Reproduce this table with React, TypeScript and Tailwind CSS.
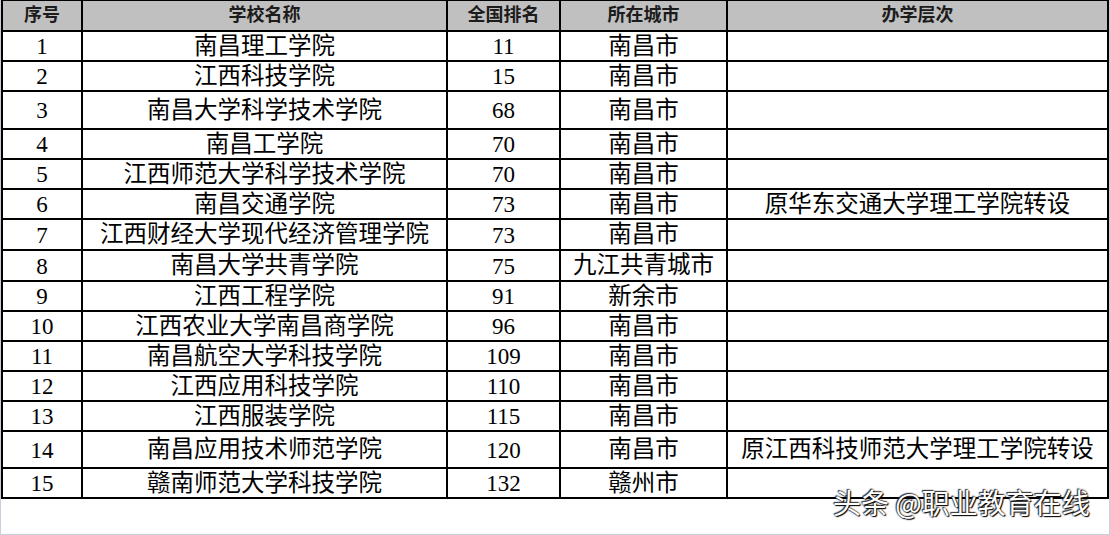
const rows: [string, string, string, string, string, string][] = [
  ["1", "南昌理工学院", "11", "南昌市", "", "h-[30px]"],
  ["2", "江西科技学院", "15", "南昌市", "", "h-[30px]"],
  ["3", "南昌大学科学技术学院", "68", "南昌市", "", "h-[38px]"],
  ["4", "南昌工学院", "70", "南昌市", "", "h-[30px]"],
  ["5", "江西师范大学科学技术学院", "70", "南昌市", "", "h-[30px]"],
  ["6", "南昌交通学院", "73", "南昌市", "原华东交通大学理工学院转设", "h-[30px]"],
  ["7", "江西财经大学现代经济管理学院", "73", "南昌市", "", "h-[31px]"],
  ["8", "南昌大学共青学院", "75", "九江共青城市", "", "h-[31px]"],
  ["9", "江西工程学院", "91", "新余市", "", "h-[30px]"],
  ["10", "江西农业大学南昌商学院", "96", "南昌市", "", "h-[30px]"],
  ["11", "南昌航空大学科技学院", "109", "南昌市", "", "h-[30px]"],
  ["12", "江西应用科技学院", "110", "南昌市", "", "h-[30px]"],
  ["13", "江西服装学院", "115", "南昌市", "", "h-[30px]"],
  ["14", "南昌应用技术师范学院", "120", "南昌市", "原江西科技师范大学理工学院转设", "h-[37px]"],
  ["15", "赣南师范大学科技学院", "132", "赣州市", "", "h-[30px]"],
];

const App = () => {
  return (
    <div className="relative w-[1110px] h-[535px] bg-white border-x border-b border-[#c8d0de] overflow-hidden font-['Liberation_Serif','Noto_Sans_CJK_SC',serif] text-black">
      <table className="table-fixed border-collapse w-[1108px] leading-none">
        <colgroup>
          <col className="w-[80px]" />
          <col className="w-[365px]" />
          <col className="w-[113px]" />
          <col className="w-[167px]" />
          <col />
        </colgroup>
        <thead>
          <tr className="h-[30px] bg-[#c0c0c0] text-[18px] font-bold text-[#1c1c1c]">
            <th className="border-2 border-t border-black">序号</th>
            <th className="border-2 border-t border-black">学校名称</th>
            <th className="border-2 border-t border-black">全国排名</th>
            <th className="border-2 border-t border-black">所在城市</th>
            <th className="border-2 border-t border-black">办学层次</th>
          </tr>
        </thead>
        <tbody>
          {rows.map(([no, name, rank, city, note, h]) => (
            <tr key={no} className={h}>
              <td className="border-2 border-black text-center text-[23px] pt-[2px]">{no}</td>
              <td className="border-2 border-black text-center text-[23.5px] pt-[2px]">{name}</td>
              <td className="border-2 border-black text-center text-[23px] pt-[2px]">{rank}</td>
              <td className="border-2 border-black text-center text-[23.5px] pt-[2px]">{city}</td>
              <td className="border-2 border-black text-center text-[23.5px] pt-[2px]">{note}</td>
            </tr>
          ))}
        </tbody>
      </table>
      <div className="absolute left-[832px] top-[488px] text-[28px] leading-none text-white font-['Noto_Sans_CJK_SC',sans-serif] [text-shadow:1px_1px_1px_#000,-1px_-1px_1px_#333,0_0_2px_#000]">
        头条 @职业教育在线
      </div>
    </div>
  );
};

export default App;
